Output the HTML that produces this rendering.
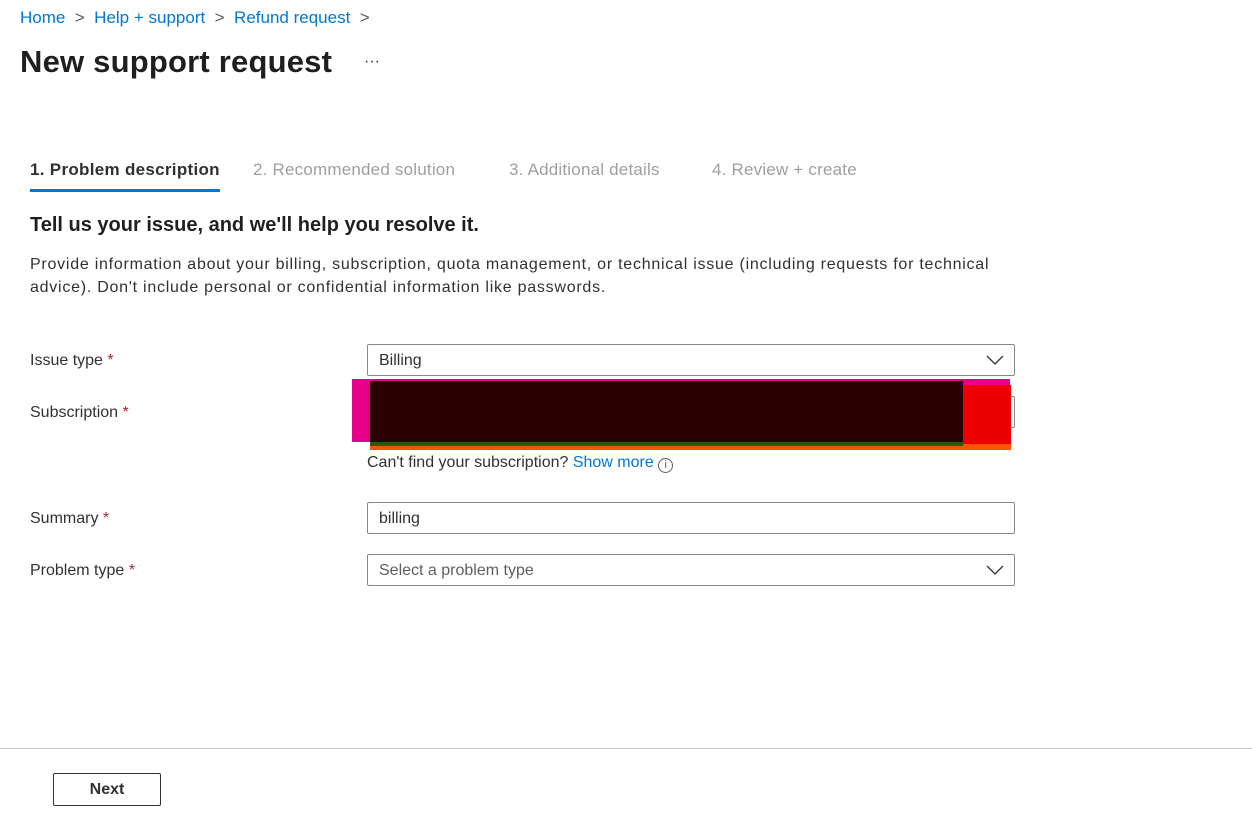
<!DOCTYPE html>
<html><head><style>
*{margin:0;padding:0;box-sizing:border-box}
body{width:1252px;height:817px;background:#fff;font-family:"Liberation Sans",sans-serif;color:#323130;position:relative;overflow:hidden}
.a{position:absolute;white-space:nowrap}
.bc{color:#0078d4;font-size:17px}
.gt{color:#605e5c}
.tab{font-size:17px;color:#a19f9d;letter-spacing:0.2px}
.lbl{font-size:16px;color:#323130}
.req{color:#a4262c}
.box{position:absolute;left:367px;width:648px;height:32px;border:1px solid #8a8886;border-radius:2px;font-size:16px;padding:7px 11px;color:#323130}
.chev{position:absolute;right:10px;top:9px}
</style></head><body>
<div class="a bc" style="left:20px;top:8px">Home <span class="gt">&nbsp;&gt;&nbsp;</span> Help + support <span class="gt">&nbsp;&gt;&nbsp;</span> Refund request <span class="gt">&nbsp;&gt;</span></div>
<div class="a" style="left:20px;top:44px;font-size:31px;font-weight:bold;color:#201f1e;letter-spacing:0.2px">New support request</div>
<div class="a" style="left:364px;top:53px;font-size:16px;color:#323130">···</div>
<div class="a" style="left:30px;top:160px;font-size:17px;color:#323130;font-weight:bold;letter-spacing:0.3px">1. Problem description</div>
<div class="a" style="left:30px;top:189px;width:190px;height:3px;background:#0078d4"></div>
<div class="a tab" style="left:253px;top:160px">2. Recommended solution</div>
<div class="a tab" style="left:509px;top:160px">3. Additional details</div>
<div class="a tab" style="left:712px;top:160px">4. Review + create</div>
<div class="a" style="left:30px;top:214px;font-size:20px;font-weight:bold;color:#201f1e">Tell us your issue, and we'll help you resolve it.</div>
<div class="a" style="left:30px;top:253px;font-size:16px;line-height:23px;white-space:normal;width:985px;letter-spacing:0.75px">Provide information about your billing, subscription, quota management, or technical issue (including requests for technical advice). Don't include personal or confidential information like passwords.</div>
<div class="a lbl" style="left:30px;top:352px">Issue type <span class="req">*</span></div>
<div class="box" style="top:344px">Billing<svg class="chev" width="18" height="12" viewBox="0 0 18 12"><path d="M1 2l8 8 8-8" fill="none" stroke="#323130" stroke-width="1.3"/></svg></div>
<div class="a lbl" style="left:30px;top:404px">Subscription <span class="req">*</span></div>
<div class="box" style="top:396px"><svg class="chev" width="18" height="12" viewBox="0 0 18 12"><path d="M1 2l8 8 8-8" fill="none" stroke="#323130" stroke-width="1.3"/></svg></div>
<div class="a" style="left:352px;top:379px;width:20px;height:63px;background:#e8008a"></div>
<div class="a" style="left:352px;top:379px;width:658px;height:6px;background:#e8008a"></div>
<div class="a" style="left:963px;top:385px;width:48px;height:65px;background:#ee0000"></div>
<div class="a" style="left:370px;top:444px;width:641px;height:6px;background:#ff5500"></div>
<div class="a" style="left:370px;top:440px;width:593px;height:6px;background:#2a5a00"></div>
<div class="a" style="left:370px;top:381px;width:593px;height:61px;background:#2a0000"></div>
<div class="a" style="left:367px;top:454px;font-size:16px">Can't find your subscription? <span style="color:#0078d4">Show more</span> <span style="display:inline-block;width:15px;height:15px;border:1px solid #605e5c;border-radius:50%;font-size:11px;text-align:center;line-height:13px;color:#605e5c;vertical-align:-1px">i</span></div>
<div class="a lbl" style="left:30px;top:510px">Summary <span class="req">*</span></div>
<div class="box" style="top:502px">billing</div>
<div class="a lbl" style="left:30px;top:562px">Problem type <span class="req">*</span></div>
<div class="box" style="top:554px;color:#605e5c">Select a problem type<svg class="chev" width="18" height="12" viewBox="0 0 18 12"><path d="M1 2l8 8 8-8" fill="none" stroke="#323130" stroke-width="1.3"/></svg></div>
<div class="a" style="left:0;top:748px;width:1252px;height:1px;background:#c8c6c4"></div>
<div class="a" style="left:53px;top:773px;width:108px;height:33px;border:1px solid #323130;border-radius:2px;font-size:16px;font-weight:bold;text-align:center;line-height:31px;color:#323130">Next</div>
</body></html>
